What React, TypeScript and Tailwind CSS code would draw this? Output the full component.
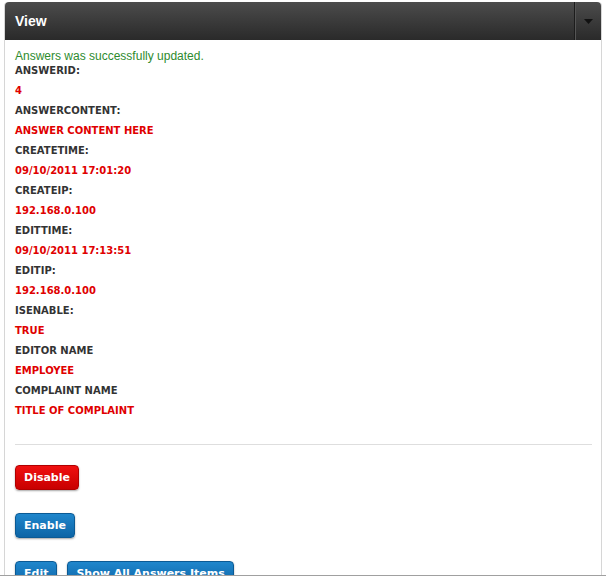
import React from "react";

const fields: [string, string][] = [
  ["ANSWERID:", "4"],
  ["ANSWERCONTENT:", "ANSWER CONTENT HERE"],
  ["CREATETIME:", "09/10/2011 17:01:20"],
  ["CREATEIP:", "192.168.0.100"],
  ["EDITTIME:", "09/10/2011 17:13:51"],
  ["EDITIP:", "192.168.0.100"],
  ["ISENABLE:", "TRUE"],
  ["EDITOR NAME", "EMPLOYEE"],
  ["COMPLAINT NAME", "TITLE OF COMPLAINT"],
];

const verdanaish = { fontFamily: '"DejaVu Sans", Verdana, sans-serif' };

function Btn({ label, tone }: { label: string; tone: "red" | "blue" }) {
  const cls =
    tone === "red"
      ? "bg-gradient-to-b from-[#f01010] to-[#c80000] border-[#b00000]"
      : "bg-gradient-to-b from-[#1f86cc] to-[#0d65a6] border-[#0b5a94]";
  return (
    <button
      className={`${cls} h-[25px] rounded-[4px] border px-[8px] text-[11px] font-bold leading-none text-white shadow-[0_1px_2px_rgba(0,0,0,0.35)]`}
      style={verdanaish}
    >
      {label}
    </button>
  );
}

export default function App() {
  return (
    <div
      className="h-[576px] overflow-hidden border-b border-[#a0a0a0] bg-white pt-[2px] pl-[4px] pr-[4px]"
      style={{ fontFamily: '"Liberation Sans", Arial, sans-serif' }}
    >
      <div className="h-[600px] rounded-t-[4px] border-x border-[#d6d6d6] bg-white">
        <div className="flex h-[38px] items-center rounded-t-[4px] bg-gradient-to-b from-[#4c4c4c] to-[#2a2a2a]">
          <div className="flex-1 pl-[10px] text-[14px] font-bold text-white">View</div>
          <div className="flex h-full w-[27px] items-center justify-center border-l border-l-[#1c1c1c] shadow-[inset_1px_0_0_#555]">
            <svg width="9" height="5" viewBox="0 0 9 5">
              <path d="M0 0 L9 0 L4.5 5 Z" fill="#111" />
            </svg>
          </div>
        </div>
        <div className="px-[10px] pt-[12px]">
          <div className="text-[12px] leading-[9px] text-[#2e8b2e]">Answers was successfully updated.</div>
          <div className="flex flex-col" style={verdanaish}>
            {fields.map(([k, v]) => (
              <React.Fragment key={k}>
                <div className="text-[10px] font-bold leading-[20px] text-[#333]">{k}</div>
                <div className="text-[10px] font-bold leading-[20px] text-[#e00000]">{v}</div>
              </React.Fragment>
            ))}
          </div>
          <div className="mt-[23px] mr-[-1px] border-t border-[#dedede]" />
          <div className="mt-[20px] flex flex-col items-start gap-[23px]">
            <Btn label="Disable" tone="red" />
            <Btn label="Enable" tone="blue" />
            <div className="flex gap-[10px]">
              <Btn label="Edit" tone="blue" />
              <Btn label="Show All Answers Items" tone="blue" />
            </div>
          </div>
        </div>
      </div>
    </div>
  );
}
